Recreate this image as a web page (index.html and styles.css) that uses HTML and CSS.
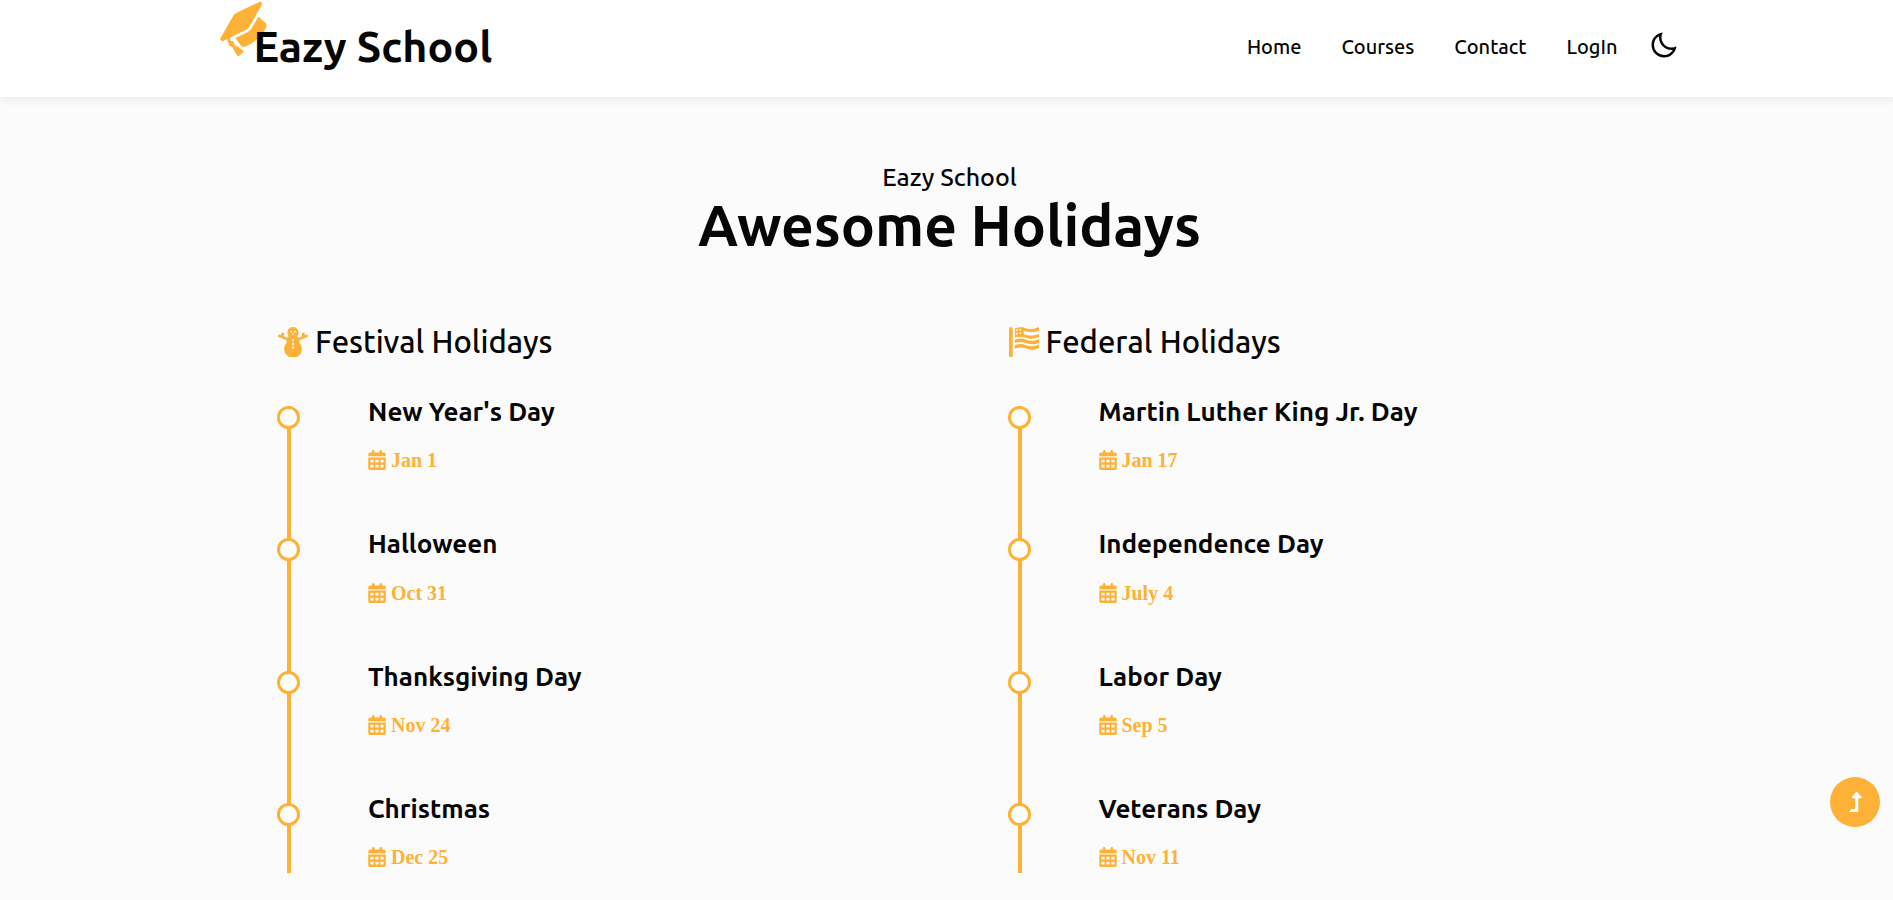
FILE: index.html
```html
<!DOCTYPE html>
<html lang="en">
<head>
<meta charset="utf-8">
<meta name="viewport" content="width=device-width, initial-scale=1">
<title>Eazy School - Holidays</title>
<link rel="stylesheet" href="styles.css">
</head>
<body>
<svg class="sprite" aria-hidden="true">
  <symbol id="calendar" viewBox="0 0 448 512"><path fill-rule="evenodd" d="M96 32a32 32 0 0 1 64 0v32h128V32a32 32 0 0 1 64 0v32h48a48 48 0 0 1 48 48v48H0v-48a48 48 0 0 1 48-48h48zM0 192h448v272a48 48 0 0 1-48 48H48a48 48 0 0 1-48-48zM56 248v72h80v-72zM184 248v72h80v-72zM312 248v72h80v-72zM56 376v72h80v-72zM184 376v72h80v-72zM312 376v72h80v-72z"/></symbol>
</svg>

<header class="header">
  <div class="header-inner">
    <a class="logo" href="#">
      <svg class="logo-icon" viewBox="0 0 640 512" aria-hidden="true"><path d="M622.34 153.2L343.4 67.5c-15.2-4.67-31.6-4.67-46.79 0L17.66 153.2c-23.54 7.23-23.54 38.36 0 45.59l48.63 14.94c-10.67 13.19-17.23 29.28-17.88 46.9C38.78 266.15 32 276.11 32 288c0 10.78 5.68 19.85 13.86 25.65L20.33 428.53C18.11 438.52 25.71 448 35.94 448h56.11c10.24 0 17.84-9.48 15.62-19.47L82.14 313.65C90.32 307.85 96 298.78 96 288c0-11.57-6.47-21.25-15.66-26.87.76-15.02 8.44-28.3 20.69-36.72L296.6 284.5c9.06 2.78 26.44 6.25 46.79 0l278.95-85.7c23.55-7.24 23.55-38.36 0-45.6zM352.79 315.09c-28.53 8.76-52.84 3.92-65.59 0l-145.02-44.55L128 384c0 35.35 85.96 64 192 64s192-28.65 192-64l-14.18-113.47-145.03 44.56z"/></svg>
      <span class="logo-text">Eazy School</span>
    </a>
    <nav class="nav">
      <a href="#">Home</a>
      <a href="#">Courses</a>
      <a href="#">Contact</a>
      <a href="#">LogIn</a>
      <button class="theme-toggle" type="button" aria-label="Dark mode">
        <svg viewBox="0 0 24 24" aria-hidden="true"><path d="M10 6a8 8 0 0 0 11.955 6.956C21.474 18.03 17.2 22 12 22 6.477 22 2 17.523 2 12c0-5.2 3.97-9.474 9.044-9.955A7.963 7.963 0 0 0 10 6zm-6 6a8 8 0 0 0 8 8 8.006 8.006 0 0 0 6.957-4.045c-.316.03-.636.045-.957.045-5.523 0-10-4.477-10-10 0-.321.015-.64.045-.957A8.006 8.006 0 0 0 4 12z"/></svg>
      </button>
    </nav>
  </div>
</header>

<main class="main">
  <div class="heading">
    <p class="subtitle">Eazy School</p>
    <h1 class="title">Awesome Holidays</h1>
  </div>

  <div class="columns">
    <section class="column">
      <h2 class="column-title">
        <svg class="column-icon" viewBox="0 0 512 512" aria-hidden="true"><path d="M510.900 152.300l-5.900-14.500c-3.300-8-12.600-11.900-20.800-8.700L456 140.600v-29c0-8.600-7.200-15.600-16-15.600h-16c-8.800 0-16 7-16 15.600v46.900c0 .5.3 1 .3 1.500l-56.400 23c-5.900-10-13.300-18.900-22-26.600 13.600-16.600 22-37.400 22-60.500 0-53-43-96-96-96s-96 43-96 96c0 23.100 8.500 43.900 22 60.500-8.700 7.700-16 16.600-22 26.600l-56.400-23c.1-.5.3-1 .3-1.500v-46.900C104 103 96.800 96 88 96H72c-8.800 0-16 7-16 15.600v29l-28.100-11.500c-8.200-3.200-17.500.7-20.800 8.700l-5.900 14.500c-3.300 8 .7 17.100 8.900 20.300l135.200 55.200c-.4 4-1.200 8-1.200 12.200 0 10.100 1.700 19.600 4.200 28.900C120.900 296.400 104 334.200 104 376c0 54 28.400 100.900 70.800 127.800 9.300 5.900 20.300 8.200 31.300 8.200h99.200c13.300 0 26.300-4.100 37.200-11.700 46.500-32.300 74.400-89.400 62.900-152.600-5.500-30.200-20.500-57.600-41.600-79 2.500-9.200 4.200-18.700 4.200-28.700 0-4.200-.8-8.100-1.200-12.200L502 172.600c8.100-3.100 12.100-12.200 8.900-20.300z"/><g class="cutout"><circle cx="224" cy="80" r="17"/><circle cx="288" cy="80" r="17"/><path d="M238 108h36l-18 42z"/><circle cx="256" cy="224" r="18"/><circle cx="256" cy="288" r="18"/><circle cx="256" cy="352" r="18"/></g></svg>
        <span>Festival Holidays</span>
      </h2>
      <ol class="timeline">
        <li class="event"><span class="rail"></span><div class="event-body"><h3 class="event-name">New Year's Day</h3><p class="event-date"><svg aria-hidden="true"><use href="#calendar"/></svg><time>Jan 1</time></p></div></li>
        <li class="event"><span class="rail"></span><div class="event-body"><h3 class="event-name">Halloween</h3><p class="event-date"><svg aria-hidden="true"><use href="#calendar"/></svg><time>Oct 31</time></p></div></li>
        <li class="event"><span class="rail"></span><div class="event-body"><h3 class="event-name">Thanksgiving Day</h3><p class="event-date"><svg aria-hidden="true"><use href="#calendar"/></svg><time>Nov 24</time></p></div></li>
        <li class="event"><span class="rail"></span><div class="event-body"><h3 class="event-name">Christmas</h3><p class="event-date"><svg aria-hidden="true"><use href="#calendar"/></svg><time>Dec 25</time></p></div></li>
      </ol>
    </section>

    <section class="column">
      <h2 class="column-title">
        <svg class="column-icon" viewBox="0 0 512 512" aria-hidden="true"><path d="M0 32a32 32 0 0 1 64 0v448a32 32 0 0 1-64 0z"/><path d="M100 24C150 0 200 0 250 8C310 36 380 48 440 25L490 4Q512 0 512 20V58C440 90 370 100 250 62V125C330 150 400 160 512 118V170C440 205 350 208 290 184C220 158 160 160 100 182z"/><path d="M100 216C160 190 230 190 290 218C360 246 440 240 512 204V268C430 302 360 300 290 274C220 250 160 252 100 274zM100 308C160 284 230 284 290 310C360 336 440 332 512 300V346Q510 360 496 366C430 396 350 394 290 368C220 342 160 346 100 370z"/><g class="cutout"><circle cx="136" cy="56" r="17"/><circle cx="190" cy="46" r="17"/><circle cx="136" cy="114" r="17"/><circle cx="190" cy="106" r="17"/></g></svg>
        <span>Federal Holidays</span>
      </h2>
      <ol class="timeline">
        <li class="event"><span class="rail"></span><div class="event-body"><h3 class="event-name">Martin Luther King Jr. Day</h3><p class="event-date"><svg aria-hidden="true"><use href="#calendar"/></svg><time>Jan 17</time></p></div></li>
        <li class="event"><span class="rail"></span><div class="event-body"><h3 class="event-name">Independence Day</h3><p class="event-date"><svg aria-hidden="true"><use href="#calendar"/></svg><time>July 4</time></p></div></li>
        <li class="event"><span class="rail"></span><div class="event-body"><h3 class="event-name">Labor Day</h3><p class="event-date"><svg aria-hidden="true"><use href="#calendar"/></svg><time>Sep 5</time></p></div></li>
        <li class="event"><span class="rail"></span><div class="event-body"><h3 class="event-name">Veterans Day</h3><p class="event-date"><svg aria-hidden="true"><use href="#calendar"/></svg><time>Nov 11</time></p></div></li>
      </ol>
    </section>
  </div>
</main>

<a class="to-top" href="#" aria-label="Back to top">
  <svg viewBox="0 0 320 512" aria-hidden="true"><path d="M313.553 119.669L209.587 7.666c-9.485-10.214-25.676-10.229-35.174 0L70.438 119.669C56.232 134.969 67.062 160 88.025 160H152v272H68.024a11.996 11.996 0 0 0-8.485 3.515l-56 56C-4.021 499.074 1.333 512 12.024 512H208c13.255 0 24-10.745 24-24V160h63.966c20.878 0 31.851-24.969 17.587-40.331z"/></svg>
</a>
</body>
</html>
```
FILE: styles.css
```css
:root {
  --accent: #fdb137;
  --page: #fbfbfb;
  --ink: #060606;
}

*, *::before, *::after { box-sizing: border-box; }

body {
  margin: 0;
  background: var(--page);
  color: var(--ink);
  font-family: Ubuntu, "Noto Sans", sans-serif;
}

h1, h2, h3, p, ol { margin: 0; padding: 0; }
ol { list-style: none; }
a { color: inherit; text-decoration: none; }
svg { display: block; fill: currentColor; flex: none; }
.sprite { display: none; }
.cutout { fill: var(--page); }

.header {
  background: #fff;
  box-shadow: 0 0 10px 2px rgba(0, 0, 0, 0.07);
}

.header-inner {
  display: flex;
  align-items: center;
  justify-content: space-between;
  max-width: 1460px;
  min-height: 97px;
  margin: 0 auto;
}

.logo {
  position: relative;
  padding: 0 0 6px 37px;
}

.logo-icon {
  position: absolute;
  left: 1px;
  top: -12px;
  width: 56px;
  height: 45px;
  color: var(--accent);
  transform: rotate(-43deg);
}

.logo-text {
  position: relative;
  font-size: 43px;
  font-weight: 700;
  line-height: 60px;
}

.nav {
  display: flex;
  align-items: center;
  gap: 40px;
  padding-bottom: 4px;
  font-size: 20px;
  font-weight: 500;
  line-height: 28px;
}

.theme-toggle {
  margin: 0 -2px 0 -9px;
  padding: 0 0 4px;
  border: 0;
  background: none;
  color: inherit;
  cursor: pointer;
}

.theme-toggle svg { width: 30px; height: 30px; }

.main { padding: 60px 0 26px; }

.heading { text-align: center; padding: 0 0 4px 6px; }

.subtitle {
  font-size: 25px;
  font-weight: 500;
  line-height: 40px;
}

.title {
  font-size: 57px;
  font-weight: 700;
  line-height: 56px;
}

.columns {
  display: grid;
  grid-template-columns: 1fr 1fr;
  max-width: 1461px;
  margin: 0 auto;
  padding-top: 60px;
}

.column { padding-left: 61px; }

.column-title {
  display: flex;
  align-items: center;
  gap: 7px;
  padding-left: 1px;
  font-size: 31px;
  font-weight: 500;
  line-height: 50px;
}

.column-icon {
  width: 30px;
  height: 30px;
  color: var(--accent);
}

.timeline { padding-top: 27px; }

.event {
  display: grid;
  grid-template-columns: 23px 1fr;
  column-gap: 68px;
}

.rail {
  background: linear-gradient(var(--accent), var(--accent)) 10px 0 / 4px 100% no-repeat;
}

.event:first-child .rail { background-position: 10px 12px; }

.rail::before {
  content: "";
  display: block;
  width: 23px;
  height: 23px;
  margin-top: 12px;
  border: 3px solid var(--accent);
  border-radius: 50%;
  background: #fff;
}

.event-body { padding-bottom: 52px; }
.event:last-child .event-body { padding-bottom: 2px; }

.event-name {
  font-size: 26px;
  font-weight: 600;
  line-height: 1.36;
}

.event-date {
  display: flex;
  align-items: center;
  gap: 5px;
  margin-top: 17px;
  color: var(--accent);
  font-family: "Liberation Serif", serif;
  font-size: 20px;
  font-weight: 700;
  line-height: 28px;
}

.event-date svg { width: 18px; height: 20px; }

.to-top {
  position: fixed;
  right: 13px;
  bottom: 73px;
  display: grid;
  place-items: center;
  width: 50px;
  height: 50px;
  border-radius: 50%;
  background: var(--accent);
  color: #fff;
}

.to-top svg { width: 13px; height: 20px; }
```
